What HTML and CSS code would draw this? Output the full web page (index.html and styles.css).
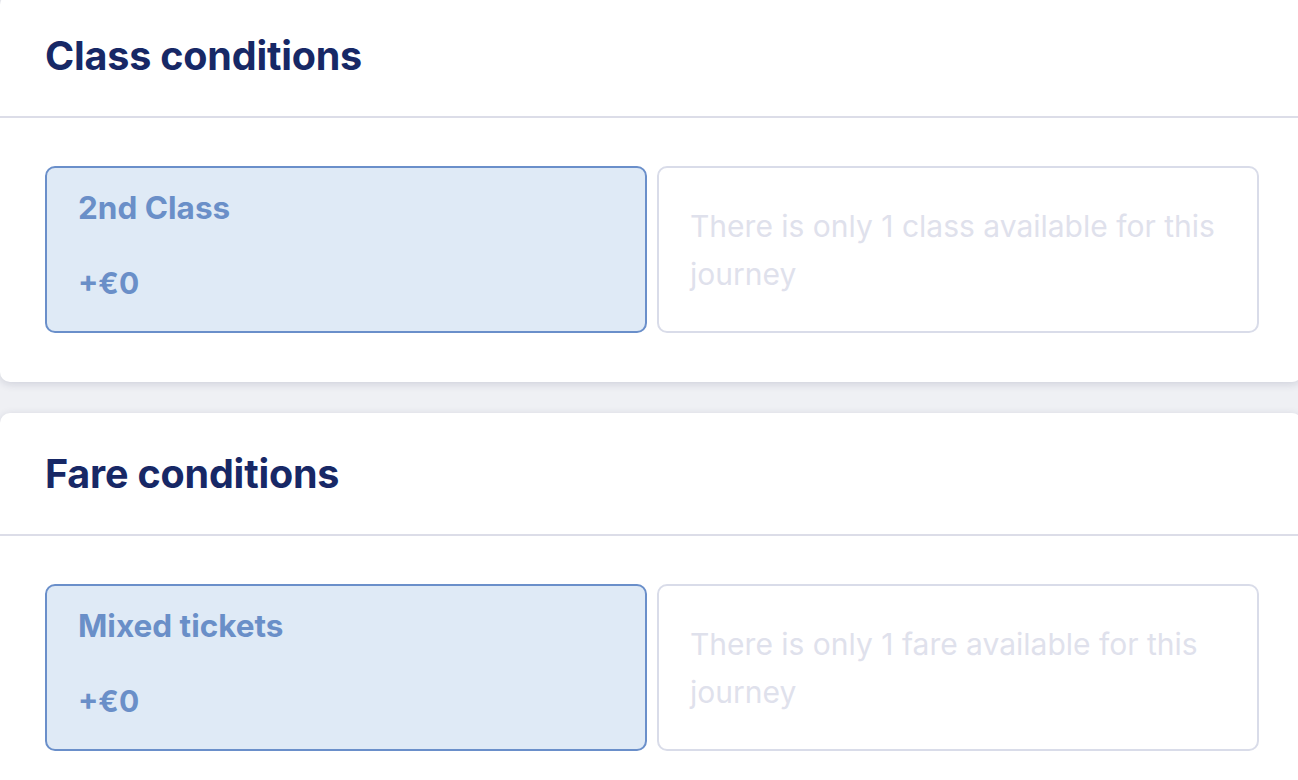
FILE: index.html
```html
<!DOCTYPE html>
<html lang="en">
<head>
<meta charset="utf-8">
<title>Conditions</title>
<link rel="stylesheet" href="styles.css">
</head>
<body>
<main class="page">
  <section class="card card-first">
    <header class="card-header">
      <h2 class="card-title">Class conditions</h2>
    </header>
    <div class="card-body">
      <div class="options">
        <div class="option option-selected">
          <div class="option-name">2nd Class</div>
          <div class="option-price">+€0</div>
        </div>
        <div class="option option-empty">
          <p class="option-note">There is only 1 class available for this journey</p>
        </div>
      </div>
    </div>
  </section>
  <section class="card">
    <header class="card-header">
      <h2 class="card-title">Fare conditions</h2>
    </header>
    <div class="card-body">
      <div class="options">
        <div class="option option-selected">
          <div class="option-name">Mixed tickets</div>
          <div class="option-price">+€0</div>
        </div>
        <div class="option option-empty">
          <p class="option-note">There is only 1 fare available for this journey</p>
        </div>
      </div>
    </div>
  </section>
</main>
</body>
</html>
```

FILE: styles.css
```css
* { box-sizing: border-box; }

html, body {
  margin: 0;
  padding: 0;
  background: #eff0f4;
  overflow: hidden;
}

body {
  font-family: Inter, "Noto Sans", sans-serif;
  width: 1298px;
  height: 780px;
}

.page {
  display: flex;
  flex-direction: column;
  gap: 31px;
  margin-top: -5px;
  margin-right: -4px;
}

.card {
  background: #ffffff;
  border-radius: 10px;
  box-shadow: 0 2px 8px rgba(40, 45, 90, 0.16);
}

.card-header {
  height: 123px;
  display: flex;
  align-items: center;
  padding: 0 45px;
  border-bottom: 2px solid #dcdde8;
}

.card-title {
  margin: 0;
  font-size: 39.5px;
  line-height: 46px;
  font-weight: 700;
  color: #172866;
  letter-spacing: -0.2px;
}

.card-body {
  padding: 48px 39px 49px 45px;
}

.options {
  display: grid;
  grid-template-columns: 602px 602px;
  gap: 10px;
}

.option {
  height: 167px;
  border-radius: 10px;
  border: 2px solid #d9dce9;
  background: #ffffff;
}

.option-selected {
  background: #dfeaf6;
  border-color: #6a8fca;
  padding: 21px 31px 29px 31px;
  color: #6a8fc8;
  font-weight: 700;
  line-height: 38px;
  display: flex;
  flex-direction: column;
  gap: 37px;
}

.option-name {
  font-size: 31.5px;
}

.option-price {
  font-size: 30px;
}

.option-empty {
  display: flex;
  align-items: center;
  padding: 0 31px;
}

.option-note {
  margin: 0;
  font-size: 30px;
  line-height: 48px;
  color: #dfe1ec;
}
```
